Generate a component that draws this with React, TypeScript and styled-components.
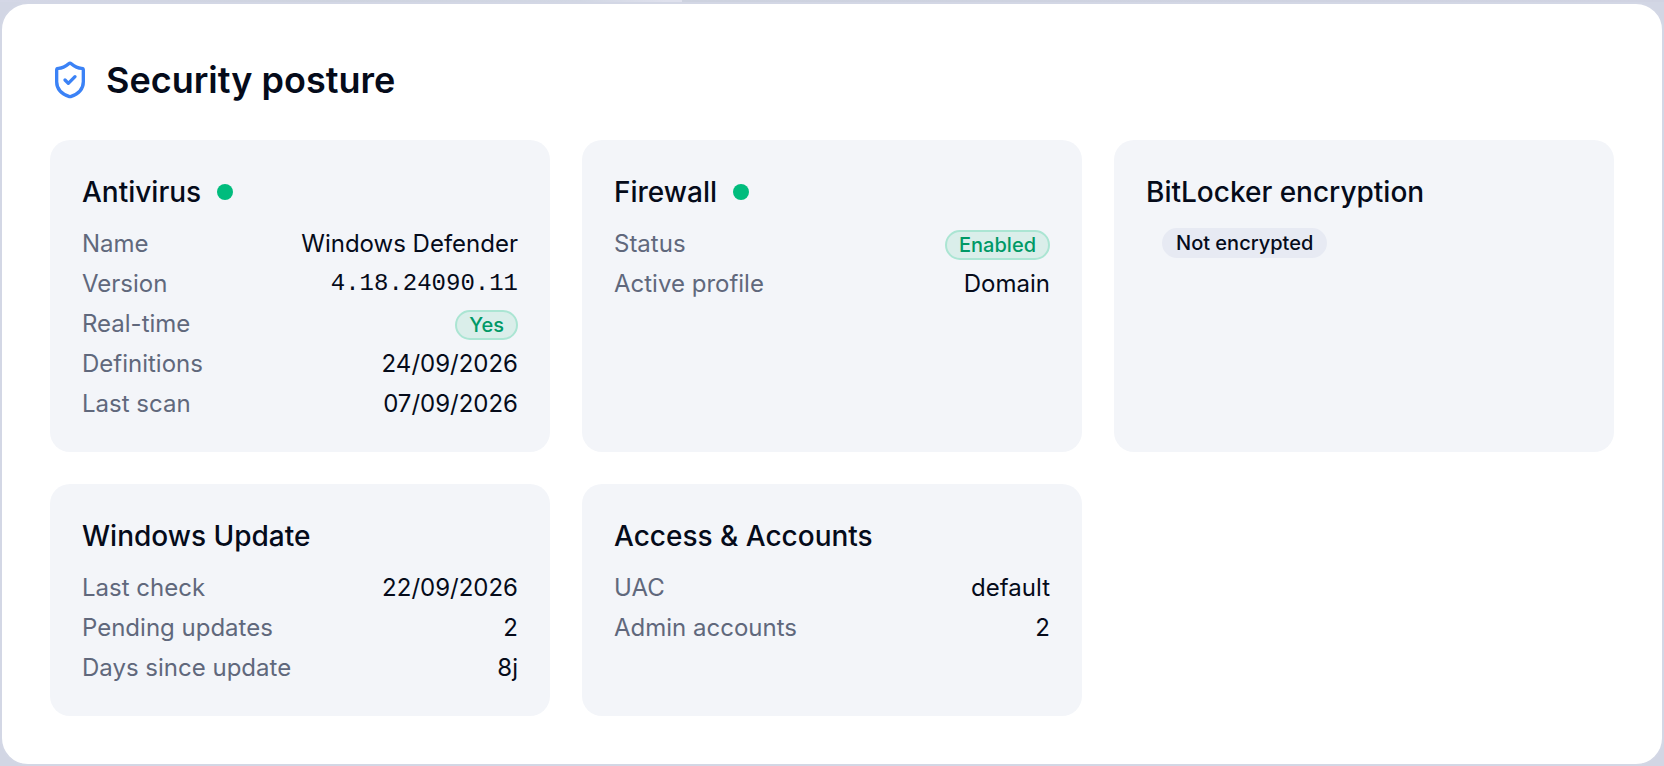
import React from "react";
import styled, { createGlobalStyle, css } from "styled-components";
import { ShieldCheck } from "lucide-react";

const GlobalStyle = createGlobalStyle`
  *, *::before, *::after { box-sizing: border-box; }
  body {
    margin: 0;
    background: #d2d6e4;
    color: #050b1a;
    font-family: Inter, "Liberation Sans", sans-serif;
    font-size: 24px;
    line-height: 32px;
  }
`;

const Page = styled.main`
  padding: 2px 0 0;
  background: linear-gradient(90deg, #d4d7e6 0%, #ced3df 20%, #d2d7e4 35%, #dfe1ed 40%, #dfe1ed 41%, #cdd2df 41%, #d0d3e2 100%) top / 100% 2px no-repeat;
`;

const Panel = styled.section`
  padding: 48px;
  background: #ffffff;
  border: 2px solid #d3d7e5;
  border-radius: 28px;
`;

const PanelHeader = styled.header`
  display: flex;
  align-items: center;
  gap: 16px;
  margin-bottom: 32px;
`;

const PanelIcon = styled(ShieldCheck)`
  flex: none;
  color: #3b82f6;
`;

const PanelTitle = styled.h2`
  margin: 0;
  font-size: 36px;
  font-weight: 600;
  line-height: 56px;
`;

const CardGrid = styled.div`
  display: grid;
  grid-template-columns: repeat(3, minmax(0, 1fr));
  gap: 32px;
`;

const CardBox = styled.article`
  display: flex;
  flex-direction: column;
  align-items: stretch;
  gap: 16px;
  padding: 32px;
  background: #f3f5f9;
  border-radius: 20px;
`;

const CardTitle = styled.h3`
  display: flex;
  align-items: center;
  gap: 16px;
  margin: 0;
  font-size: 28px;
  font-weight: 500;
  line-height: 40px;
`;

const StatusDot = styled.span`
  width: 16px;
  height: 16px;
  border-radius: 50%;
  background: #00bc7d;
`;

const DetailList = styled.dl`
  display: flex;
  flex-direction: column;
  gap: 8px;
  margin: 0;
`;

const DetailRow = styled.div`
  display: flex;
  justify-content: space-between;
  align-items: flex-end;
`;

const Label = styled.dt`
  color: #60687c;
`;

const Value = styled.dd<{ $mono?: boolean }>`
  display: flex;
  margin: 0;
  ${({ $mono }) => $mono && css`font-family: "Liberation Mono", monospace;`}
`;

const Badge = styled.span<{ $tone: "success" | "neutral" }>`
  padding: 0 12px;
  border: 2px solid transparent;
  border-radius: 15px;
  font-size: 20px;
  font-weight: 500;
  line-height: 26px;
  ${({ $tone }) =>
    $tone === "success"
      ? css`
          color: #009966;
          background: #daeeea;
          border-color: #abe5d3;
        `
      : css`
          background: #e7eaf3;
          border-color: #e7eaf3;
        `}
`;

const BadgeLine = styled.div`
  display: flex;
  padding-left: 16px;
`;

type Detail = { label: string; value: string; kind?: "badge" | "mono" };

type CardProps = {
  title: string;
  healthy?: boolean;
  details?: Detail[];
  children?: React.ReactNode;
};

function Card({ title, healthy, details, children }: CardProps) {
  return (
    <CardBox>
      <CardTitle>
        {title}
        {healthy && <StatusDot />}
      </CardTitle>
      {details && (
        <DetailList>
          {details.map(({ label, value, kind }) => (
            <DetailRow key={label}>
              <Label>{label}</Label>
              <Value $mono={kind === "mono"}>
                {kind === "badge" ? <Badge $tone="success">{value}</Badge> : value}
              </Value>
            </DetailRow>
          ))}
        </DetailList>
      )}
      {children}
    </CardBox>
  );
}

const antivirus: Detail[] = [
  { label: "Name", value: "Windows Defender" },
  { label: "Version", value: "4.18.24090.11", kind: "mono" },
  { label: "Real-time", value: "Yes", kind: "badge" },
  { label: "Definitions", value: "24/09/2026" },
  { label: "Last scan", value: "07/09/2026" },
];

const firewall: Detail[] = [
  { label: "Status", value: "Enabled", kind: "badge" },
  { label: "Active profile", value: "Domain" },
];

const updates: Detail[] = [
  { label: "Last check", value: "22/09/2026" },
  { label: "Pending updates", value: "2" },
  { label: "Days since update", value: "8j" },
];

const access: Detail[] = [
  { label: "UAC", value: "default" },
  { label: "Admin accounts", value: "2" },
];

export default function App() {
  return (
    <Page>
      <GlobalStyle />
      <Panel>
        <PanelHeader>
          <PanelIcon size={40} />
          <PanelTitle>Security posture</PanelTitle>
        </PanelHeader>
        <CardGrid>
          <Card title="Antivirus" healthy details={antivirus} />
          <Card title="Firewall" healthy details={firewall} />
          <Card title="BitLocker encryption">
            <BadgeLine>
              <Badge $tone="neutral">Not encrypted</Badge>
            </BadgeLine>
          </Card>
          <Card title="Windows Update" details={updates} />
          <Card title="Access &amp; Accounts" details={access} />
        </CardGrid>
      </Panel>
    </Page>
  );
}
